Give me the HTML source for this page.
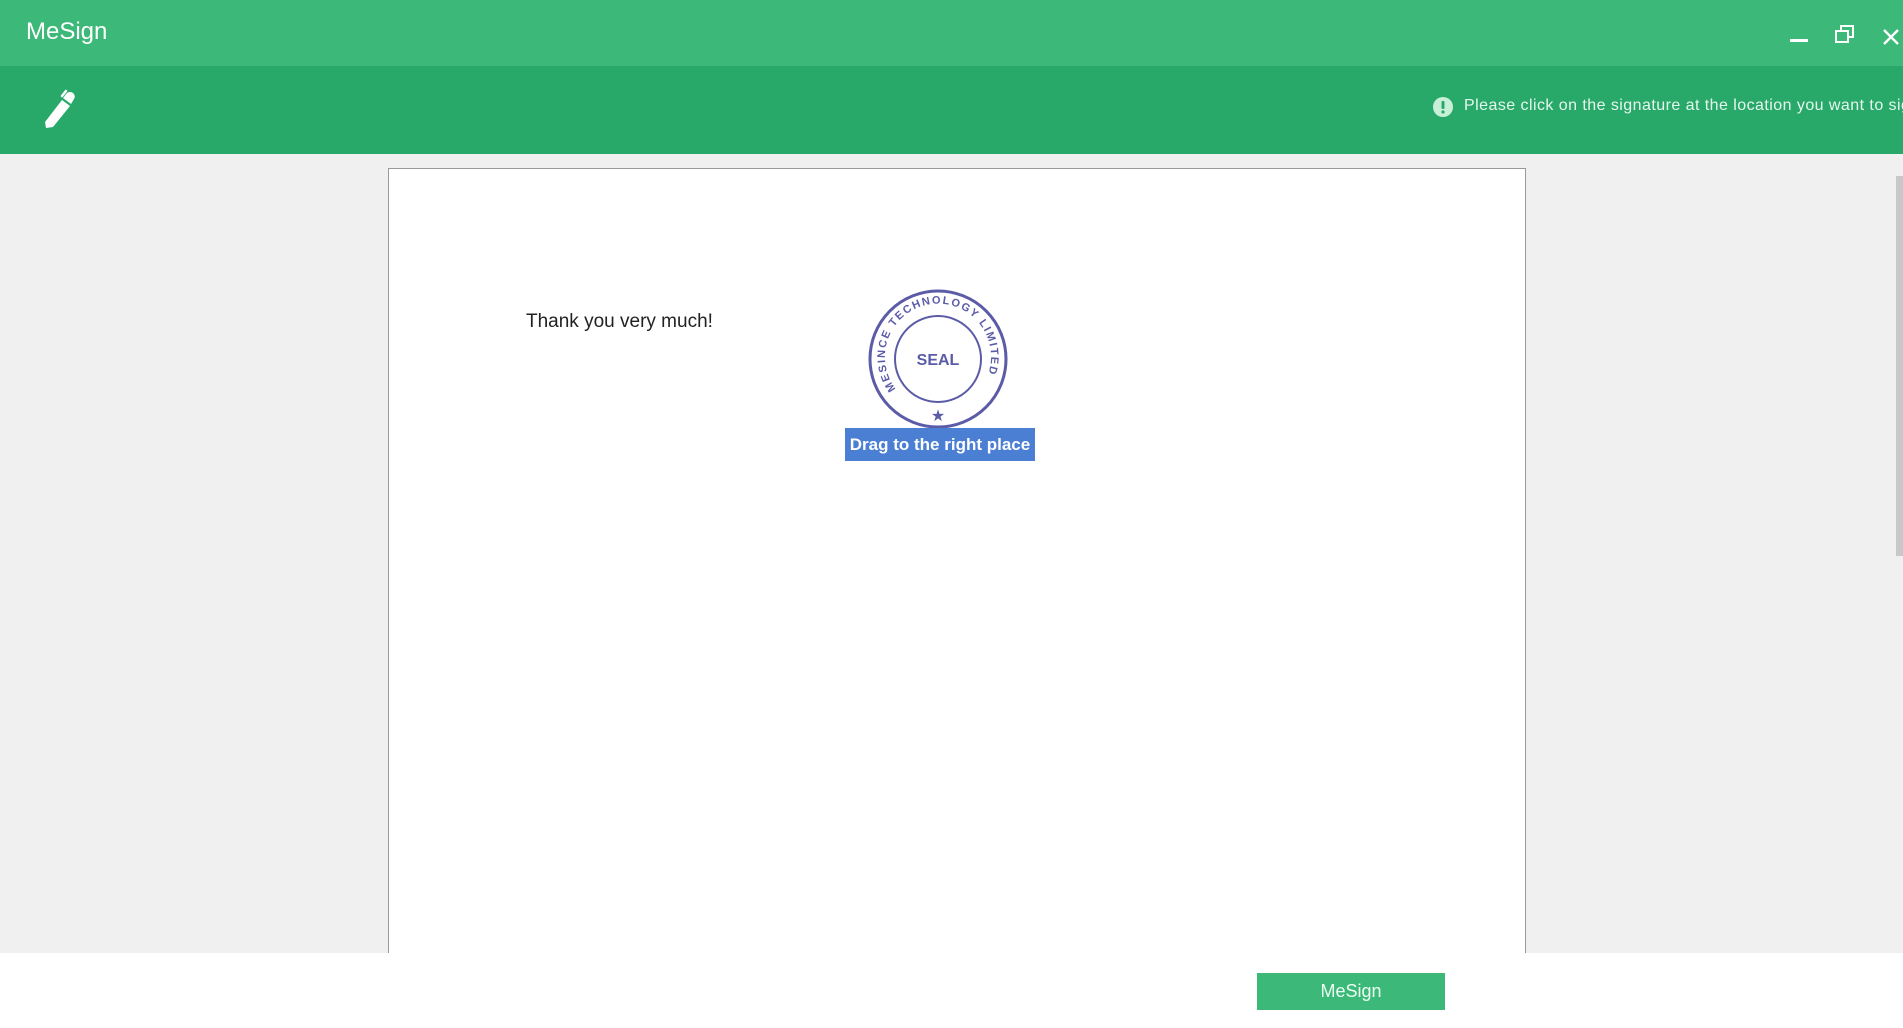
<!DOCTYPE html>
<html><head><meta charset="utf-8"><style>
*{margin:0;padding:0;box-sizing:border-box}
body{width:1903px;height:1028px;overflow:hidden;background:#f0f0f0;font-family:"Liberation Sans","DejaVu Sans",sans-serif;position:relative}
.t{position:absolute;left:0;top:0;width:1903px;height:66px;background:#3cb878}
.tb{position:absolute;left:0;top:66px;width:1903px;height:88px;background:#28a96a}
.abs{position:absolute}
</style></head><body>
<div class="t"></div>
<div class="abs" style="left:26px;top:18px;color:#fff;font-size:24px">MeSign</div>
<div class="abs" style="left:1790px;top:39px;width:18px;height:3px;background:#fff"></div>
<svg class="abs" style="left:1834px;top:24px" width="22" height="20" viewBox="0 0 22 20"><rect x="7" y="2" width="12" height="11" fill="none" stroke="#fff" stroke-width="2"/><rect x="2" y="7" width="12" height="11" fill="#3cb878" stroke="#fff" stroke-width="2"/></svg>
<svg class="abs" style="left:1882px;top:28px" width="18" height="18" viewBox="0 0 18 18"><path d="M2 2L16 16M16 2L2 16" stroke="#fff" stroke-width="2.4"/></svg>
<div class="tb"></div>
<svg class="abs" style="left:40px;top:88px" width="40" height="42" viewBox="0 0 40 42"><path d="M6 40L5 34L22 12L30 18L13 39Z" fill="#fff"/><path d="M23 10L27 5Q30 3 33 5Q36 8 34 11L31 16Z" fill="#fff"/><path d="M22 8L26 3" stroke="#fff" stroke-width="2.5" stroke-linecap="round"/></svg>
<svg class="abs" style="left:1432px;top:96px" width="22" height="22" viewBox="0 0 22 22"><circle cx="11" cy="11" r="10" fill="#c8f0d8"/><rect x="9.5" y="5" width="3" height="8" rx="1" fill="#28a96a"/><circle cx="11" cy="16" r="1.6" fill="#28a96a"/></svg>
<div class="abs" style="left:1464px;top:97px;color:#e6f7ee;font-size:16px;letter-spacing:0.45px;white-space:nowrap">Please click on the signature at the location you want to sign</div>
<div class="abs" style="left:388px;top:168px;width:1138px;height:800px;background:#fff;border:1px solid #999"></div>
<div class="abs" style="left:526px;top:311px;font-size:19px;color:#222">Thank you very much!</div>
<svg class="abs" style="left:866px;top:287px" width="144" height="144" viewBox="0 0 144 144">
<defs><path id="arc" d="M30 102A53 53 0 1 1 114 102"/></defs>
<circle cx="72" cy="72" r="68" fill="none" stroke="#5b5ba8" stroke-width="3"/>
<circle cx="72" cy="72" r="43" fill="none" stroke="#5b5ba8" stroke-width="2"/>
<text font-size="11" font-weight="bold" fill="#5b5ba8" letter-spacing="1.6"><textPath href="#arc">MESINCE TECHNOLOGY LIMITED</textPath></text>
<text x="72" y="78" text-anchor="middle" font-size="16" font-weight="bold" fill="#5b5ba8">SEAL</text>
<text x="72" y="134" text-anchor="middle" font-size="16" fill="#5b5ba8">★</text>
</svg>
<div class="abs" style="left:845px;top:428px;width:190px;height:33px;background:#4a7fd4;color:#fff;font-weight:bold;font-size:17px;line-height:33px;text-align:center">Drag to the right place</div>
<div class="abs" style="left:1896px;top:176px;width:7px;height:380px;background:#c8c8c8"></div>
<div class="abs" style="left:0;top:953px;width:1903px;height:75px;background:#fff"></div>
<div class="abs" style="left:1257px;top:973px;width:188px;height:37px;background:#3cb878;color:#eafff2;font-size:18px;line-height:37px;text-align:center">MeSign</div>
</body></html>
